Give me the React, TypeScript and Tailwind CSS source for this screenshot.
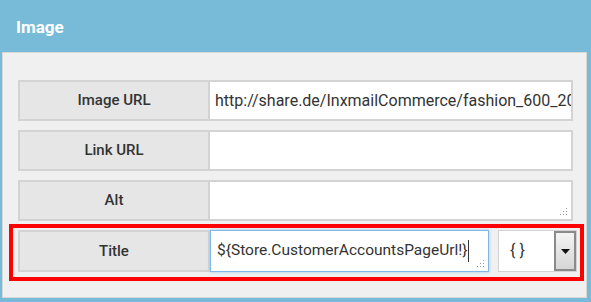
import React from 'react';

const Grip: React.FC = () => (
  <svg className="absolute right-[3px] bottom-[3px]" width="8" height="8" viewBox="0 0 8 8">
    <g fill="#9a9a9a">
      <rect x="6" y="0" width="1" height="1" />
      <rect x="3" y="3" width="1" height="1" />
      <rect x="6" y="3" width="1" height="1" />
      <rect x="0" y="6" width="1" height="1" />
      <rect x="3" y="6" width="1" height="1" />
      <rect x="6" y="6" width="1" height="1" />
    </g>
  </svg>
);

const Label: React.FC<{ text: string }> = ({ text }) => (
  <div className="w-[192px] h-full shrink-0 flex items-center justify-center bg-[#e6e6e6] border-2 border-[#d3d3d3] text-[15px] font-medium text-[#333]">
    {text}
  </div>
);

const App: React.FC = () => {
  return (
    <div className="w-[591px] h-[302px] bg-[#77bbd9] flex flex-col overflow-hidden" style={{ fontFamily: 'Roboto, "Liberation Sans", sans-serif' }}>
      <div className="h-[52px] shrink-0 flex items-center pl-[16px] pt-[3px]">
        <span className="text-white text-[17px] font-bold">Image</span>
      </div>
      <div className="ml-[2px] mr-[4px] h-[246px] bg-[#f0f0f0] border border-[#d8d8d8] pt-[27px]">
        <div className="flex flex-col gap-[9px] ml-[15px] mr-[13px]">
          <div className="flex h-[41px]">
            <Label text="Image URL" />
            <div className="flex-1 bg-white border-2 border-l-0 border-[#d3d3d3] flex items-center pl-[5px] overflow-hidden whitespace-nowrap text-[16px] text-[#333]">
              http://share.de/InxmailCommerce/fashion_600_200.jpg
            </div>
          </div>
          <div className="flex h-[41px]">
            <Label text="Link URL" />
            <div className="flex-1 bg-white border-2 border-l-0 border-[#d3d3d3]" />
          </div>
          <div className="flex h-[41px]">
            <Label text="Alt" />
            <div className="relative flex-1 bg-white border-2 border-l-0 border-[#d3d3d3]">
              <Grip />
            </div>
          </div>
        </div>
        <div className="mt-[3px] ml-[6px] mr-[2px] h-[57px] border-4 border-[#ff0000] pl-[5px] pr-[2px] pt-[2px]">
          <div className="flex h-[42px] items-stretch">
            <Label text="Title" />
            <div className="relative w-[279px] bg-white border border-[#7fb7e6] shadow-[0_0_3px_#9cc8ee] flex items-center pl-[6px] whitespace-nowrap overflow-hidden text-[15.5px] text-[#333]">
              {'${Store.CustomerAccountsPageUrl!}'}
              <span className="inline-block w-px h-[22px] bg-[#333]" />
              <Grip />
            </div>
            <div className="ml-[9px] w-[79px] flex bg-white border border-[#d3d3d3]">
              <div className="flex-1 flex items-center pl-[11px] text-[16px] text-[#333]">{'{ }'}</div>
              <div className="w-[22px] border-2 border-[#8a8a8a] bg-gradient-to-b from-[#f4f4f4] to-[#d6d6d6] flex items-center justify-center">
                <svg width="9" height="5" viewBox="0 0 9 5"><path d="M0 0h9L4.5 5z" fill="#111" /></svg>
              </div>
            </div>
          </div>
        </div>
      </div>
    </div>
  );
};

export default App;
